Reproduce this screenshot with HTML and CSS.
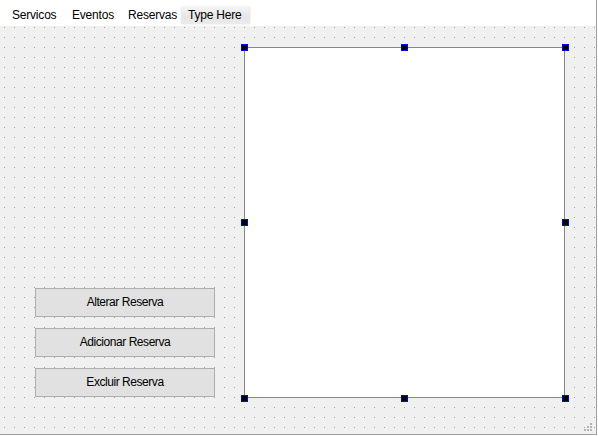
FILE: index.html
```html
<!DOCTYPE html>
<html>
<head>
<meta charset="utf-8">
<title>Form</title>
<link rel="stylesheet" href="styles.css">
</head>
<body>
<div class="window">
  <div class="menubar">
    <div class="menu-item w1">Servicos</div>
    <div class="menu-item w2">Eventos</div>
    <div class="menu-item w3">Reservas</div>
    <div class="menu-item w4 type-here">Type Here</div>
  </div>
  <div class="form">
    <div class="left-col">
      <button class="btn">Alterar Reserva</button>
      <button class="btn">Adicionar Reserva</button>
      <button class="btn">Excluir Reserva</button>
    </div>
    <div class="canvas">
      <span class="handle h-tl"></span>
      <span class="handle h-tc"></span>
      <span class="handle h-tr"></span>
      <span class="handle h-ml"></span>
      <span class="handle h-mr"></span>
      <span class="handle h-bl"></span>
      <span class="handle h-bc"></span>
      <span class="handle h-br"></span>
    </div>
    <svg class="grip" width="8" height="8" viewBox="0 0 8 8">
      <rect x="6" y="0" width="2" height="2" fill="#b5b5b5"/>
      <rect x="3" y="3" width="2" height="2" fill="#b5b5b5"/>
      <rect x="6" y="3" width="2" height="2" fill="#b5b5b5"/>
      <rect x="0" y="6" width="2" height="2" fill="#b5b5b5"/>
      <rect x="3" y="6" width="2" height="2" fill="#b5b5b5"/>
      <rect x="6" y="6" width="2" height="2" fill="#b5b5b5"/>
    </svg>
  </div>
</div>
</body>
</html>
```

FILE: styles.css
```css
html, body {
  margin: 0;
  padding: 0;
  background: #ffffff;
}

body {
  width: 598px;
  height: 436px;
  font-family: "Liberation Sans", Arial, sans-serif;
  font-size: 12px;
  color: #000;
}

.window {
  width: 596px;
  height: 434px;
  border-right: 1px solid #a0a0a0;
  border-bottom: 1px solid #a0a0a0;
  display: flex;
  flex-direction: column;
}

.menubar {
  height: 26px;
  background: #ffffff;
  display: flex;
  padding-left: 4px;
  box-sizing: border-box;
}

.menu-item {
  height: 17px;
  margin-top: 7px;
  line-height: 17px;
  padding-left: 8px;
  box-sizing: border-box;
  letter-spacing: -0.2px;
}

.w1 { width: 60px; }
.w2 { width: 56px; }
.w3 { width: 61px; padding-left: 8px; }
.w4 { width: 69px; padding-left: 7px; }

.type-here {
  background: linear-gradient(#f4f4f4, #e6e6e6 60%, #ebebeb);
  box-shadow: 0 0 2px #e0e0e0;
}

.form {
  position: relative;
  flex: 1;
  display: flex;
  padding-top: 21px;
  box-sizing: border-box;
  background-color: #f0f0f0;
  background-image:
    linear-gradient(to right, transparent 1px, #f0f0f0 1px),
    linear-gradient(to bottom, #a2a2a2 1px, #f0f0f0 1px);
  background-size: 10px 10px, 10px 10px;
  background-position: 4px 1px, 4px 1px;
}

.left-col {
  width: 244px;
  box-sizing: border-box;
  padding-top: 241px;
  padding-left: 35px;
  display: flex;
  flex-direction: column;
  gap: 11px;
}

.btn {
  width: 180px;
  height: 29px;
  margin: 0;
  padding: 0;
  background: #e1e1e1;
  border: 1px solid #adadad;
  font-family: "Liberation Sans", Arial, sans-serif;
  font-size: 12px;
  letter-spacing: -0.45px;
  color: #000;
  text-align: center;
  line-height: 27px;
}

.canvas {
  position: relative;
  width: 321px;
  height: 351px;
  box-sizing: border-box;
  background: #ffffff;
  border: 1px solid #828790;
}

.handle {
  position: absolute;
  width: 7px;
  height: 7px;
  box-sizing: border-box;
  background: #000;
  border: 1px solid #0000ff;
}

.h-tl { left: -4px; top: -4px; }
.h-tc { left: 156px; top: -4px; }
.h-tr { right: -5px; top: -4px; }
.h-ml { left: -4px; top: 171px; }
.h-mr { right: -5px; top: 171px; }
.h-bl { left: -4px; bottom: -5px; }
.h-bc { left: 156px; bottom: -5px; }
.h-br { right: -5px; bottom: -5px; }

.grip {
  position: absolute;
  right: 4px;
  bottom: 3px;
}
```
